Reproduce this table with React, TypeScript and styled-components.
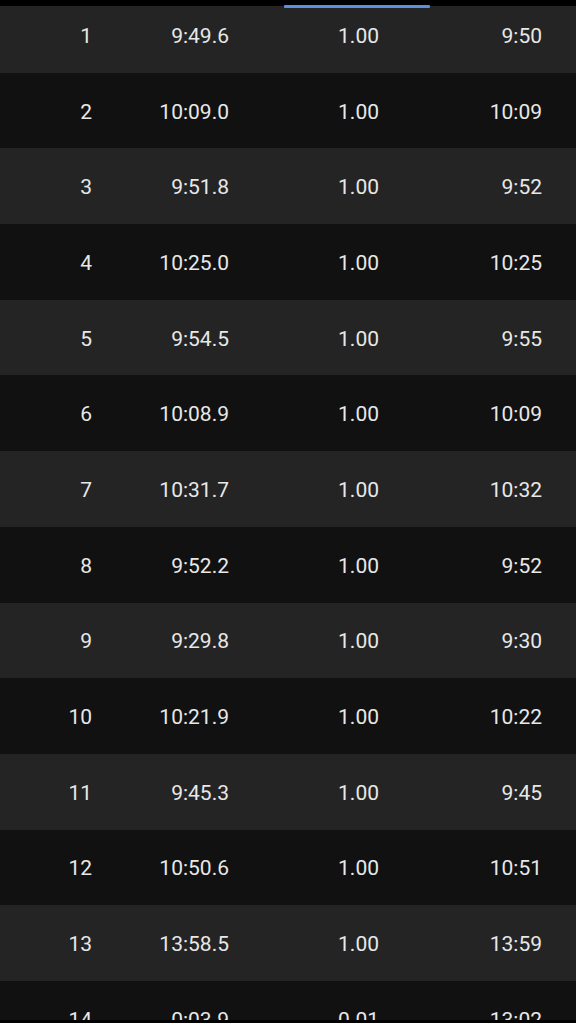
import React from "react";
import styled, { createGlobalStyle } from "styled-components";

const Global = createGlobalStyle`
  html, body { margin: 0; padding: 0; background: #000; }
  body { font-family: Roboto, "Noto Sans", sans-serif; }
`;

const Screen = styled.div`
  width: 576px;
  height: 1023px;
  display: flex;
  flex-direction: column;
  background: #000;
  overflow: hidden;
`;

const TabStrip = styled.div`
  position: relative;
  height: 6px;
  flex: 0 0 6px;
  background: #000;
  z-index: 2;
`;

const Indicator = styled.div`
  position: absolute;
  left: 284px;
  width: 146px;
  top: 5px;
  height: 3px;
  background: #5b91dc;
  border-radius: 1px;
`;

const Viewport = styled.div`
  flex: 1 1 auto;
  overflow: hidden;
`;

const List = styled.div`
  display: flex;
  flex-direction: column;
  margin-top: -9px;
`;

const Row = styled.div<{ $alt: boolean }>`
  height: 75.7px;
  flex: 0 0 75.7px;
  box-sizing: border-box;
  padding-top: 2px;
  display: grid;
  grid-template-columns: 92px 137px 150px 163px;
  align-items: center;
  background: ${(p) => (p.$alt ? "#111111" : "#242424")};
  color: #e8e8e8;
  font-size: 21px;
  line-height: 24px;
`;

const Cell = styled.div`
  text-align: right;
  white-space: nowrap;
`;

const Footer = styled.div`
  flex: 0 0 3px;
  height: 3px;
  background: #000;
`;

const data: [string, string, string, string][] = [
  ["1", "9:49.6", "1.00", "9:50"],
  ["2", "10:09.0", "1.00", "10:09"],
  ["3", "9:51.8", "1.00", "9:52"],
  ["4", "10:25.0", "1.00", "10:25"],
  ["5", "9:54.5", "1.00", "9:55"],
  ["6", "10:08.9", "1.00", "10:09"],
  ["7", "10:31.7", "1.00", "10:32"],
  ["8", "9:52.2", "1.00", "9:52"],
  ["9", "9:29.8", "1.00", "9:30"],
  ["10", "10:21.9", "1.00", "10:22"],
  ["11", "9:45.3", "1.00", "9:45"],
  ["12", "10:50.6", "1.00", "10:51"],
  ["13", "13:58.5", "1.00", "13:59"],
  ["14", "0:03.9", "0.01", "13:02"],
];

export default function App() {
  return (
    <Screen>
      <Global />
      <TabStrip>
        <Indicator />
      </TabStrip>
      <Viewport>
        <List>
          {data.map((r, i) => (
            <Row key={r[0]} $alt={i % 2 === 1}>
              {r.map((c, j) => (
                <Cell key={j}>{c}</Cell>
              ))}
            </Row>
          ))}
        </List>
      </Viewport>
      <Footer />
    </Screen>
  );
}
